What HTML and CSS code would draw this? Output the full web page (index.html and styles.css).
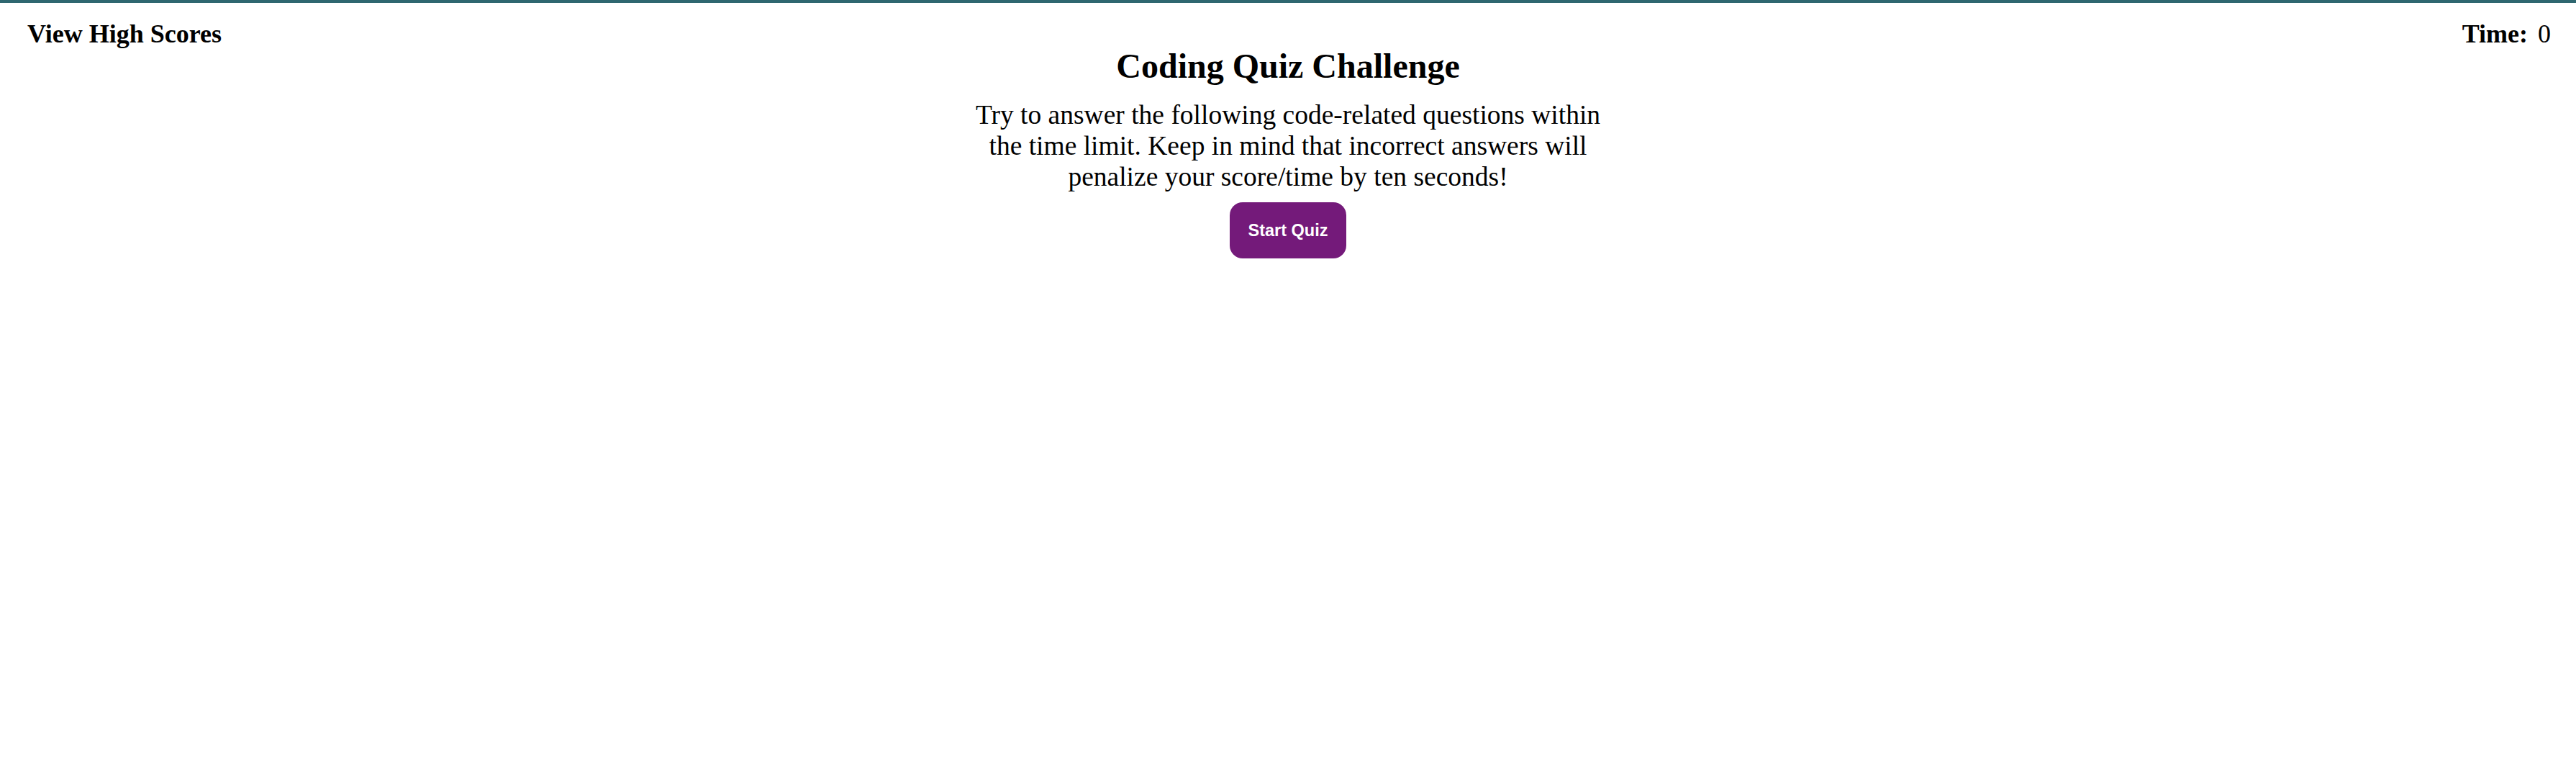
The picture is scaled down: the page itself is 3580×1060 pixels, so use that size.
FILE: index.html
```html
<!DOCTYPE html>
<html lang="en">
<head>
<meta charset="utf-8">
<title>Coding Quiz Challenge</title>
<link rel="stylesheet" href="styles.css">
</head>
<body>
<header class="top-bar">
  <a class="high-scores">View High Scores</a>
  <div class="timer"><span class="timer-label">Time:</span> <span class="timer-value">0</span></div>
</header>
<main class="intro">
  <h1 class="title">Coding Quiz Challenge</h1>
  <p class="description">Try to answer the following code-related questions within the time limit. Keep in mind that incorrect answers will penalize your score/time by ten seconds!</p>
  <button class="start-btn" type="button">Start Quiz</button>
</main>
</body>
</html>
```

FILE: styles.css
```css
html, body {
  margin: 0;
  padding: 0;
  background: #ffffff;
}

body {
  font-family: "Liberation Serif", "Times New Roman", serif;
  color: #000000;
  border-top: 4px solid #2f6770;
}

.top-bar {
  display: flex;
  justify-content: space-between;
  align-items: flex-start;
  padding: 23px 35px 0 38px;
  font-size: 36px;
  line-height: 41px;
}

.high-scores {
  font-weight: bold;
  cursor: pointer;
}

.timer-label {
  font-weight: bold;
}

.timer-value {
  margin-left: 5px;
}

.intro {
  display: flex;
  flex-direction: column;
  align-items: center;
  margin-top: -3px;
}

.title {
  font-size: 48px;
  font-weight: bold;
  margin: 0;
  line-height: 53px;
}

.description {
  width: 890px;
  text-align: center;
  font-size: 37.5px;
  line-height: 43px;
  margin: 20px 0 14px 0;
}

.start-btn {
  font-family: "Liberation Sans", Arial, sans-serif;
  font-size: 23.5px;
  font-weight: bold;
  color: #ffffff;
  background: #741a7a;
  border: none;
  border-radius: 18px;
  width: 162px;
  height: 78px;
  padding: 0;
}
```
